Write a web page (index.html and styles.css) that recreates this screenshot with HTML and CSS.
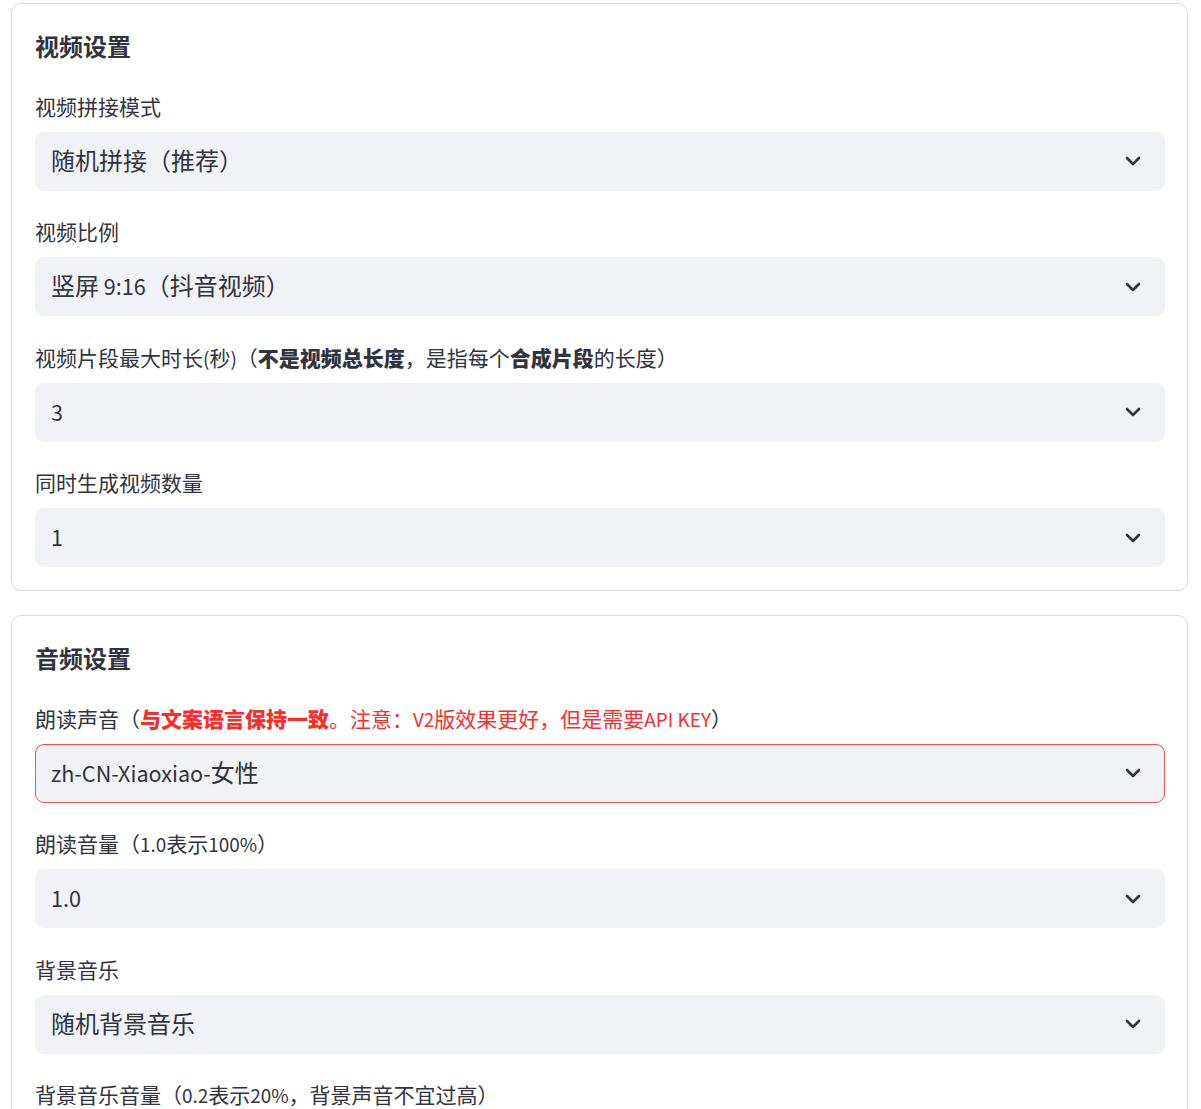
FILE: index.html
```html
<!DOCTYPE html>
<html lang="zh-CN">
<head>
<meta charset="utf-8">
<title>设置</title>
<link rel="stylesheet" href="styles.css">
</head>
<body>
<section class="card">
  <h2 class="card-title">视频设置</h2>
  <div class="field">
    <div class="label">视频拼接模式</div>
    <div class="select"><span class="value">随机拼接（推荐）</span><svg class="chev" viewBox="0 0 16 10"><path d="M2 2l6 6 6-6"/></svg></div>
  </div>
  <div class="field">
    <div class="label">视频比例</div>
    <div class="select"><span class="value">竖屏<span class="lat"> 9:16</span>（抖音视频）</span><svg class="chev" viewBox="0 0 16 10"><path d="M2 2l6 6 6-6"/></svg></div>
  </div>
  <div class="field">
    <div class="label">视频片段最大时长<span class="lat">(</span>秒<span class="lat">)</span>（<b>不是视频总长度</b>，是指每个<b>合成片段</b>的长度）</div>
    <div class="select"><span class="value"><span class="lat">3</span></span><svg class="chev" viewBox="0 0 16 10"><path d="M2 2l6 6 6-6"/></svg></div>
  </div>
  <div class="field">
    <div class="label">同时生成视频数量</div>
    <div class="select"><span class="value"><span class="lat">1</span></span><svg class="chev" viewBox="0 0 16 10"><path d="M2 2l6 6 6-6"/></svg></div>
  </div>
</section>
<section class="card">
  <h2 class="card-title">音频设置</h2>
  <div class="field">
    <div class="label">朗读声音（<span class="warn"><b>与文案语言保持一致</b>。注意：<span class="lat">V2</span>版效果更好，但是需要<span class="lat">API KEY</span></span>）</div>
    <div class="select focused"><span class="value"><span class="lat">zh-CN-Xiaoxiao-</span>女性</span><svg class="chev" viewBox="0 0 16 10"><path d="M2 2l6 6 6-6"/></svg></div>
  </div>
  <div class="field">
    <div class="label">朗读音量（<span class="lat">1.0</span>表示<span class="lat">100%</span>）</div>
    <div class="select"><span class="value"><span class="lat">1.0</span></span><svg class="chev" viewBox="0 0 16 10"><path d="M2 2l6 6 6-6"/></svg></div>
  </div>
  <div class="field">
    <div class="label">背景音乐</div>
    <div class="select"><span class="value">随机背景音乐</span><svg class="chev" viewBox="0 0 16 10"><path d="M2 2l6 6 6-6"/></svg></div>
  </div>
  <div class="field">
    <div class="label">背景音乐音量（<span class="lat">0.2</span>表示<span class="lat">20%</span>，背景声音不宜过高）</div>
    <div class="select"><span class="value"><span class="lat">0.2</span></span><svg class="chev" viewBox="0 0 16 10"><path d="M2 2l6 6 6-6"/></svg></div>
  </div>
</section>
</body>
</html>
```
FILE: styles.css
```css
html, body {
  margin: 0;
  padding: 0;
  background: #ffffff;
}
body {
  font-family: "Noto Sans CJK SC", "Noto Sans", sans-serif;
  color: #31333f;
  padding-top: 3px;
}
.card {
  margin: 0 13px 24px 11px;
  border: 1px solid #d9d9dc;
  border-radius: 10px;
  padding: 25px 22px 23px 23px;
  display: flex;
  flex-direction: column;
  gap: 27.5px;
}
.card-title {
  margin: 0 0 2px 0;
  font-size: 24px;
  line-height: 34px;
  font-weight: 700;
  color: #31333f;
}
.field {
  display: flex;
  flex-direction: column;
}
.label {
  font-size: 21px;
  line-height: 26px;
  height: 26px;
  margin-bottom: 13px;
  color: #31333f;
  white-space: nowrap;
}
.label b {
  font-weight: 900;
}
.lat {
  font-size: 0.9em;
  line-height: 1;
}
.warn {
  color: #ff2b2b;
}
.select {
  height: 59px;
  box-sizing: border-box;
  background: #f0f2f6;
  border: 1px solid #f0f2f6;
  border-radius: 9px;
  display: flex;
  align-items: center;
  justify-content: space-between;
  padding: 0 23px 0 15px;
}
.select.focused {
  border-color: #ff4b4b;
}
.value {
  font-size: 24px;
  line-height: 30px;
  padding-bottom: 3px;
  color: #31333f;
}
.chev {
  width: 16px;
  height: 10px;
  fill: none;
  stroke: #31333f;
  stroke-width: 2.6;
  stroke-linecap: round;
  stroke-linejoin: round;
}
```
